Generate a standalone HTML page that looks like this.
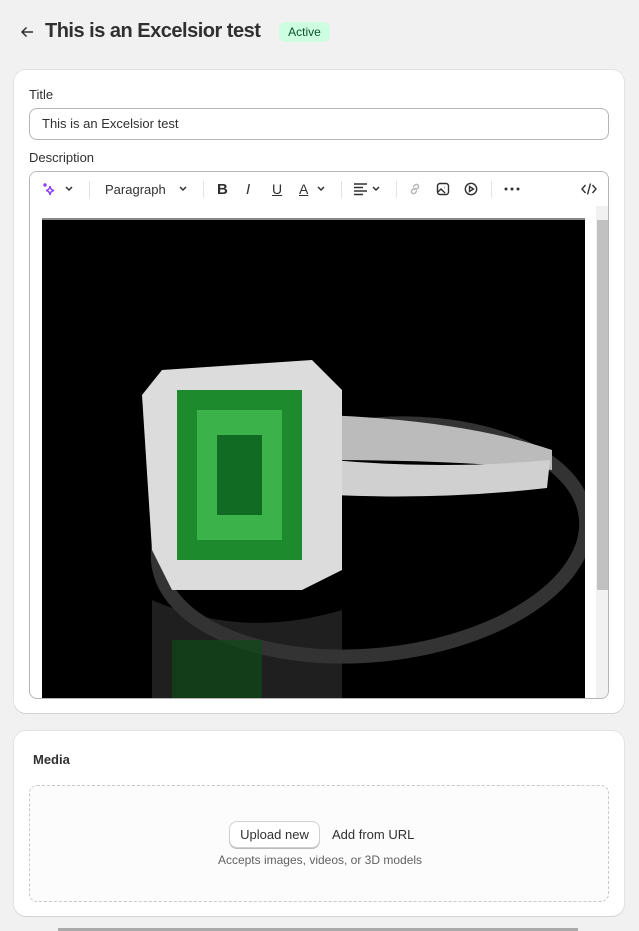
<!DOCTYPE html>
<html><head><meta charset="utf-8"><style>
*{box-sizing:border-box;margin:0;padding:0}
body{width:639px;height:931px;background:#f1f1f1;font-family:"Liberation Sans",sans-serif;color:#303030;position:relative;overflow:hidden}
.abs{position:absolute}
.card{position:absolute;left:14px;width:610px;background:#fff;border-radius:12px;box-shadow:0 1px 0 #d4d4d4,0 0 0 1px #e3e3e3}
.lbl{font-size:13px;color:#303030}
.tb{font-size:13px;color:#303030}
</style></head><body>
<svg class="abs" style="left:20px;top:25px" width="14" height="14" viewBox="0 0 14 14" fill="none" stroke="#303030" stroke-width="1.5"><path d="M13 7H2M6.5 2.5L2 7l4.5 4.5"/></svg>
<div class="abs" style="left:45px;top:20px;font-size:20px;font-weight:bold;color:#303030;letter-spacing:-0.5px">This is an Excelsior test</div>
<div class="abs" style="left:279px;top:22px;width:51px;height:20px;background:#cdfee1;border-radius:7px;font-size:12px;color:#0c5132;text-align:center;line-height:20px">Active</div>

<div class="card" style="top:70px;height:643px">
  <div class="abs lbl" style="left:15px;top:17px">Title</div>
  <div class="abs" style="left:15px;top:38px;width:580px;height:32px;border:1px solid #b5b5b5;border-radius:8px;font-size:13px;line-height:30px;padding-left:12px;color:#303030">This is an Excelsior test</div>
  <div class="abs lbl" style="left:15px;top:80px">Description</div>
  <div class="abs" style="left:15px;top:101px;width:580px;height:528px;border:1px solid #b5b5b5;border-radius:8px;overflow:hidden">
    <div class="abs" style="left:0;top:0;width:580px;height:34px;background:#fff">
      <svg class="abs" style="left:12px;top:10px" width="14" height="14" viewBox="0 0 14 14" fill="none" stroke="#8a3ffc" stroke-width="1.4"><path d="M8 4Q8.5 8 12 8.5Q8.5 9 8 13Q7.5 9 4 8.5Q7.5 8 8 4z"/><circle cx="3" cy="3" r="1" fill="#8a3ffc"/></svg>
      <svg class="abs chev" style="left:34px;top:13px" width="10" height="8" viewBox="0 0 10 8" fill="none" stroke="#303030" stroke-width="1.5"><path d="M2 2l3 3 3-3"/></svg>
      <div class="abs" style="left:59px;top:9px;width:1px;height:17px;background:#e3e3e3"></div>
      <span class="abs tb" style="left:75px;top:10px">Paragraph</span>
      <svg class="abs" style="left:148px;top:13px" width="10" height="8" viewBox="0 0 10 8" fill="none" stroke="#303030" stroke-width="1.5"><path d="M2 2l3 3 3-3"/></svg>
      <div class="abs" style="left:173px;top:9px;width:1px;height:17px;background:#e3e3e3"></div>
      <span class="abs" style="left:187px;top:9px;font-size:15px;font-weight:bold">B</span>
      <span class="abs" style="left:216px;top:9px;font-size:15px;font-style:italic">I</span>
      <span class="abs" style="left:242px;top:9px;font-size:14px;text-decoration:underline">U</span>
      <span class="abs" style="left:269px;top:9px;font-size:14px;text-decoration:underline">A</span>
      <svg class="abs" style="left:286px;top:13px" width="10" height="8" viewBox="0 0 10 8" fill="none" stroke="#303030" stroke-width="1.5"><path d="M2 2l3 3 3-3"/></svg>
      <svg class="abs" style="left:323px;top:10px" width="15" height="14" viewBox="0 0 15 14" fill="none" stroke="#303030" stroke-width="1.4"><path d="M1 2h13M1 5.5h9M1 9h13M1 12.5h9"/></svg>
      <svg class="abs" style="left:341px;top:13px" width="10" height="8" viewBox="0 0 10 8" fill="none" stroke="#303030" stroke-width="1.5"><path d="M2 2l3 3 3-3"/></svg>
      <div class="abs" style="left:311px;top:9px;width:1px;height:17px;background:#e3e3e3"></div>
      <div class="abs" style="left:366px;top:9px;width:1px;height:17px;background:#e3e3e3"></div>
      <svg class="abs" style="left:378px;top:10px" width="14" height="14" viewBox="0 0 14 14" fill="none" stroke="#b5b5b5" stroke-width="1.4"><path d="M6 8l2-2M5 5l2-2a2 2 0 013 3l-2 2M9 9l-2 2a2 2 0 01-3-3l2-2"/></svg>
      <svg class="abs" style="left:406px;top:10px" width="14" height="14" viewBox="0 0 14 14" fill="none" stroke="#303030" stroke-width="1.4"><rect x="1.5" y="1.5" width="11" height="11" rx="2.5"/><path d="M2 10l3-3 4 4M8 5.5h.5"/></svg>
      <svg class="abs" style="left:434px;top:10px" width="14" height="14" viewBox="0 0 14 14" fill="none" stroke="#303030" stroke-width="1.4"><circle cx="7" cy="7" r="5.7"/><path d="M5.5 4.5v5l4-2.5z"/></svg>
      <div class="abs" style="left:461px;top:9px;width:1px;height:17px;background:#e3e3e3"></div>
      <svg class="abs" style="left:474px;top:15px" width="16" height="4" viewBox="0 0 16 4" fill="#303030"><circle cx="2" cy="2" r="1.5"/><circle cx="8" cy="2" r="1.5"/><circle cx="14" cy="2" r="1.5"/></svg>
      <svg class="abs" style="left:551px;top:10px" width="16" height="14" viewBox="0 0 16 14" fill="none" stroke="#303030" stroke-width="1.4"><path d="M4.5 3L1 7l3.5 4M11.5 3L15 7l-3.5 4M9.5 1.5l-3 11"/></svg>
    </div>
    <div class="abs" style="left:12px;top:46px;width:543px;height:482px;background:#000;border-top:2px solid #888">
      <svg width="543" height="480" viewBox="0 0 543 480">
        <ellipse cx="330" cy="320" rx="215" ry="115" fill="none" stroke="#555" stroke-width="14" transform="rotate(-6 330 320)" opacity="0.6"/>
        <path d="M280 195 Q420 200 510 230 L510 250 Q420 240 280 240z" fill="#bbb"/>
        <path d="M290 240 Q400 250 508 240 L505 268 Q400 280 290 275z" fill="#d0d0d0"/>
        <path d="M120 150 L270 140 L300 170 L300 350 L260 370 L130 370 L110 330 L100 175z" fill="#dcdcdc"/>
        <rect x="135" y="170" width="125" height="170" fill="#1e8a2e"/>
        <rect x="155" y="190" width="85" height="130" fill="#3cb34a"/>
        <rect x="175" y="215" width="45" height="80" fill="#126b22"/>
        <path d="M110 380 Q200 420 300 390 L300 480 L110 480z" fill="#333" opacity="0.6"/>
        <rect x="130" y="420" width="90" height="60" fill="#0d4a16" opacity="0.7"/>
      </svg>
    </div>
    <div class="abs" style="left:566px;top:34px;width:13px;height:494px;background:#f1f1f1"></div>
    <div class="abs" style="left:567px;top:48px;width:11px;height:370px;background:#c1c1c1"></div>
  </div>
</div>

<div class="card" style="top:731px;height:185px">
  <div class="abs" style="left:19px;top:21px;font-size:13px;font-weight:bold">Media</div>
  <div class="abs" style="left:15px;top:54px;width:580px;height:117px;border:1px dashed #c9c9c9;border-radius:8px;background:#fcfcfc">
    <div class="abs" style="left:199px;top:35px;width:91px;height:27px;border:1px solid #d0d0d0;border-radius:8px;background:#fff;box-shadow:0 1px 0 #bbb;font-size:13px;text-align:center;line-height:25px">Upload new</div>
    <div class="abs" style="left:302px;top:41px;font-size:13px">Add from URL</div>
    <div class="abs" style="left:0;top:67px;width:580px;text-align:center;font-size:12px;color:#616161">Accepts images, videos, or 3D models</div>
  </div>
</div>
<div class="abs" style="left:58px;top:928px;width:520px;height:3px;background:#aaa"></div>
</body></html>
